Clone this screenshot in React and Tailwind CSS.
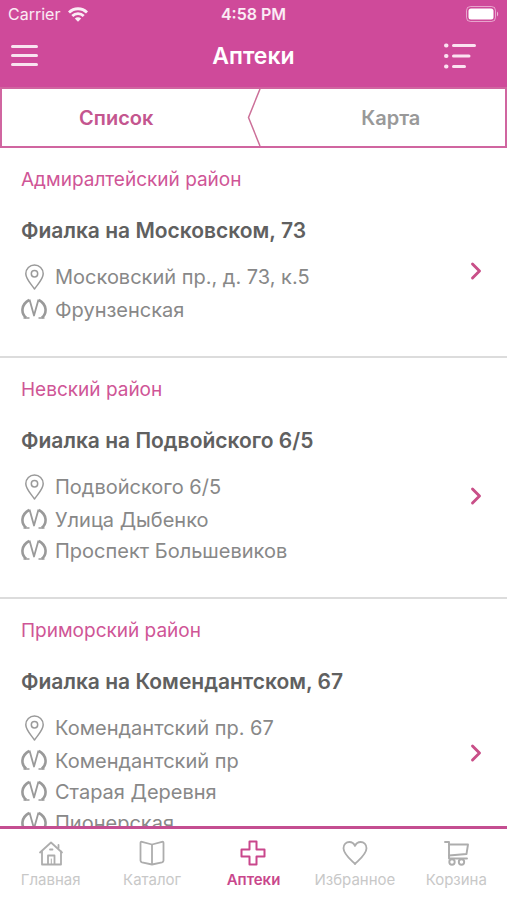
import { useState } from "react";
import { ChevronRight } from "lucide-react";
import clsx from "clsx";

const pharmacies = [
	{
		id: 1,
		district: "Адмиралтейский район",
		name: "Фиалка на Московском, 73",
		address: "Московский пр., д. 73, к.5",
		metro: ["Фрунзенская"],
	},
	{
		id: 2,
		district: "Невский район",
		name: "Фиалка на Подвойского 6/5",
		address: "Подвойского 6/5",
		metro: ["Улица Дыбенко", "Проспект Большевиков"],
	},
	{
		id: 3,
		district: "Приморский район",
		name: "Фиалка на Комендантском, 67",
		address: "Комендантский пр. 67",
		metro: ["Комендантский пр", "Старая Деревня", "Пионерская"],
	},
];

const PinIcon = () => (
	<svg viewBox="0 0 26 26" className="w-[26px] h-[26px] shrink-0" fill="none" stroke="#9a9a9a" strokeWidth="1.5">
		<path d="M13.500 25C10.500 20.500 4.800 15 4.800 9.700a8.700 8.700 0 0 1 17.400 0C22.200 15 16.500 20.500 13.500 25Z" strokeLinejoin="round" />
		<circle cx="13.500" cy="9.700" r="3.200" />
	</svg>
);

// Two arcs with a narrow V between them
const MetroIcon = () => (
	<svg viewBox="0 0 26 22" className="w-[26px] h-[22px] shrink-0 mb-0.5" fill="none" stroke="#9a9a9a" strokeLinejoin="round">
		<path d="M8.200 2C-.2 6.500-.2 15.500 5.200 19.800M17.800 2C26.200 6.500 26.200 15.500 20.800 19.800" strokeWidth="2.600" />
		<path d="M8.500 1.500 13 17.500 17.500 1.500" strokeWidth="1.800" />
		<path d="M2.500 20H8.500M17.500 20H23.500" strokeWidth="1.300" />
	</svg>
);

const HomeIcon = () => (
	<svg viewBox="0 0 26 26" className="w-[26px] h-[26px]" fill="none" stroke="currentColor" strokeWidth="1.800" strokeLinejoin="round" strokeLinecap="round">
		<path d="M2 12.500 13 2.500 24 12.500" />
		<path d="M4 11.500V24.500H23V11.500" />
		<path d="M10 24V15.500H16.500V24" />
		<path d="M12 9.500H14.500M20.500 5V8" />
		<path d="M13.300 19V24" strokeWidth="1" />
	</svg>
);

const BookIcon = () => (
	<svg viewBox="0 0 26 26" className="w-[26px] h-[26px]" fill="none" stroke="currentColor" strokeWidth="1.800" strokeLinejoin="round">
		<path d="M13 4.500 3 1.800C1.800 1.600 1.500 2 1.500 3V20.500C1.500 21.800 2 22 3 22.300L13 24.500 23 22.300C24 22 24.500 21.800 24.500 20.500V3C24.500 2 24.200 1.600 23 1.800Z" />
		<path d="M13 4.500V24.500" />
	</svg>
);

const CrossIcon = () => (
	<svg viewBox="0 0 26 26" className="w-[26px] h-[26px]" fill="none" stroke="currentColor" strokeWidth="2" strokeLinejoin="round">
		<path d="M9.500 1.500H16.500V9.500H24.500V16.500H16.500V24.500H9.500V16.500H1.500V9.500H9.500Z" />
	</svg>
);

const HeartIcon = () => (
	<svg viewBox="0 0 26 26" className="w-[26px] h-[26px]" fill="none" stroke="currentColor" strokeWidth="1.800" strokeLinejoin="round">
		<path d="M13 24C8.500 19.500 1.500 14 1.500 8.200 1.500 4.500 4.200 2 7.300 2 10 2 12 3.500 13 6 14 3.500 16 2 18.700 2 21.800 2 24.500 4.500 24.500 8.200 24.500 14 17.500 19.500 13 24Z" />
	</svg>
);

const CartIcon = () => (
	<svg viewBox="0 0 26 26" className="w-[26px] h-[26px]" fill="none" stroke="currentColor" strokeWidth="1.900" strokeLinejoin="round" strokeLinecap="round">
		<path d="M2 2H6V18.500H24" />
		<path d="M6 4.500H25L23.500 14 6 15.500" />
		<circle cx="9" cy="22" r="2.700" />
		<circle cx="18.500" cy="22" r="2.700" />
	</svg>
);

const menu = [
	{ id: "home", label: "Главная", Icon: HomeIcon },
	{ id: "catalog", label: "Каталог", Icon: BookIcon },
	{ id: "pharmacies", label: "Аптеки", Icon: CrossIcon },
	{ id: "favorites", label: "Избранное", Icon: HeartIcon },
	{ id: "cart", label: "Корзина", Icon: CartIcon },
];

const StatusBar = () => (
	<div className="grid grid-cols-3 items-center h-7 px-2 text-white/90 text-base">
		<div className="flex items-center gap-2">
			<span>Carrier</span>
			<svg viewBox="0 0 20 15" className="w-5 h-[15px]" fill="none" stroke="currentColor" strokeWidth="2.800">
				<path d="M1 5.500C6 .5 14 .5 19 5.500" />
				<path d="M4.300 9C7.500 5.800 12.500 5.800 15.700 9" />
				<path d="M10 14.800 6.800 11.600C8.600 9.900 11.400 9.900 13.200 11.600Z" fill="currentColor" stroke="none" />
			</svg>
		</div>
		<span className="text-center font-semibold whitespace-nowrap">4:58 PM</span>
		<svg viewBox="0 0 33 16" className="w-[33px] h-4 justify-self-end" fill="none">
			<rect x=".5" y=".5" width="29" height="15" rx="4" stroke="#fff" strokeOpacity=".5" />
			<rect x="2.500" y="2.500" width="25" height="11" rx="2.500" fill="#fff" />
			<path d="M31 5.500C32.600 6.500 32.600 9.500 31 10.500Z" fill="#fff" fillOpacity=".6" />
		</svg>
	</div>
);

const PharmacyCard = ({ pharmacy }) => (
	<li className="px-[21px] pt-5 pb-[31px] border-b-2 border-[#dcdcdc]">
		<p className="text-[19px] leading-6 text-[#cf5596]">{pharmacy.district}</p>
		<a href={`#pharmacy-${pharmacy.id}`} className="mt-6 flex items-center justify-between">
			<div>
				<h2 className="text-[21px] leading-[30px] font-semibold text-[#606060] mb-3.5">{pharmacy.name}</h2>
				<div className="flex items-center gap-2 h-[34px] text-xl text-[#888]">
					<PinIcon />
					<span>{pharmacy.address}</span>
				</div>
				{pharmacy.metro.map((station) => (
					<div key={station} className="flex items-center gap-2 h-[31px] text-xl text-[#888]">
						<MetroIcon />
						<span>{station}</span>
					</div>
				))}
			</div>
			<ChevronRight size={28} strokeWidth={2.500} className="-mr-1 shrink-0 text-[#c94f88]" />
		</a>
	</li>
);

export default function App() {
	const [view, setView] = useState("list");
	const [active, setActive] = useState("pharmacies");

	return (
		<div className="flex flex-col h-screen bg-white font-['Inter','Noto_Sans',sans-serif]">
			<header className="bg-[#cf4a9a] text-white">
				<StatusBar />
				<div className="grid grid-cols-[1fr_auto_1fr] items-center h-[59px] pl-[11px] pr-[31px] pb-1">
					<button aria-label="Меню" className="flex flex-col gap-1.5 w-[27px]">
						<span className="h-[3px] rounded-full bg-white/85" />
						<span className="h-[3px] rounded-full bg-white/85" />
						<span className="h-[3px] rounded-full bg-white/85" />
					</button>
					<h1 className="pl-5 text-[23px] leading-7 font-semibold">Аптеки</h1>
					<button aria-label="Сортировка" className="justify-self-end">
						<svg viewBox="0 0 32 26" className="w-8 h-[26px]" stroke="#fbe3f1" strokeWidth="3" strokeLinecap="round">
							<path d="M9.500 2.500H30.500M9.500 13H25M9.500 23.500H20.500" />
							<path d="M2 2.500H2.500M2 13H2.500M2 23.500H2.500" strokeWidth="4" />
						</svg>
					</button>
				</div>
			</header>

			{/* List / map switch */}
			<div className="flex h-[61px] shrink-0 border-2 border-[#d065a0]">
				<button
					onClick={() => setView("list")}
					className={clsx("flex-1 pr-4 text-xl font-semibold", view === "list" ? "text-[#c4568f]" : "text-[#999]")}
				>
					Список
				</button>
				<svg viewBox="0 0 14 57" preserveAspectRatio="none" className="w-3.5 h-full" fill="none" stroke="#cc7099" strokeWidth="1.500">
					<path d="M13 0 1.500 28.500 13 57" />
				</svg>
				<button
					onClick={() => setView("map")}
					className={clsx("flex-1 pl-4 text-xl font-semibold", view === "map" ? "text-[#c4568f]" : "text-[#999]")}
				>
					Карта
				</button>
			</div>

			<ul className="flex-1 min-h-0 overflow-y-auto [scrollbar-width:none]">
				{pharmacies.map((pharmacy) => (
					<PharmacyCard key={pharmacy.id} pharmacy={pharmacy} />
				))}
			</ul>

			<nav className="grid grid-cols-5 h-[74px] shrink-0 border-t-[3px] border-[#c44e91]">
				{menu.map(({ id, label, Icon }) => (
					<button
						key={id}
						onClick={() => setActive(id)}
						className={clsx(
							"flex flex-col items-center gap-1 pt-[11px] text-[15px] leading-5",
							active === id ? "text-[#c9478c] font-semibold" : "text-[#c8c8c8]"
						)}
					>
						<span className={active === id ? "text-[#c9478c]" : "text-[#adadad]"}>
							<Icon />
						</span>
						{label}
					</button>
				))}
			</nav>
		</div>
	);
}
